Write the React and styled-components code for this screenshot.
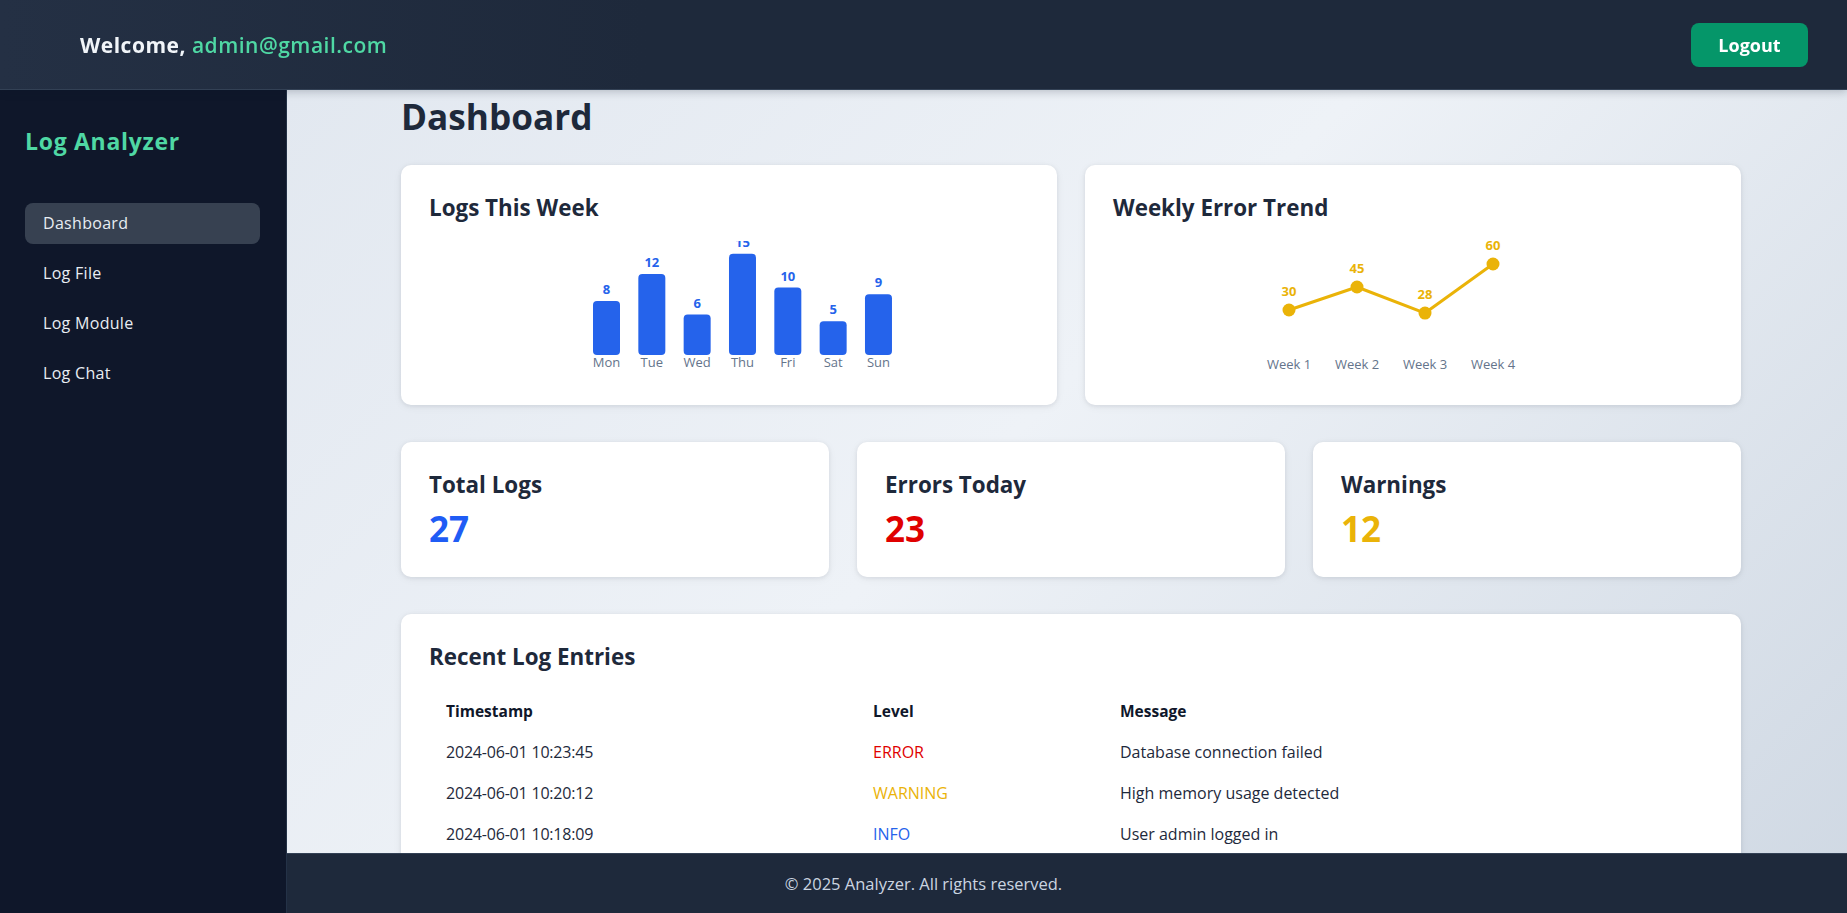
import React from 'react';
import styled, { createGlobalStyle } from 'styled-components';

const GlobalStyle = createGlobalStyle`
  * { box-sizing: border-box; }
  html, body { margin: 0; padding: 0; height: 100%; overflow: hidden; }
  body {
    font-family: "Open Sans", "Liberation Sans", sans-serif;
    background: #0f172a;
  }
`;

const Shell = styled.div`
  height: 100vh;
  display: flex;
  flex-direction: column;
  overflow: hidden;
`;

const Header = styled.header`
  height: 90px;
  flex: none;
  display: flex;
  align-items: center;
  justify-content: space-between;
  padding: 0 39px 0 80px;
  background: linear-gradient(90deg, #243044 0%, #1e293b 35%);
  border-bottom: 1px solid #334155;
  box-shadow: 0 2px 8px rgba(15, 23, 42, 0.22);
  position: relative;
  z-index: 3;
`;

const Welcome = styled.div`
  font-size: 21px;
  font-weight: 700;
  letter-spacing: 0.5px;
  color: #f1f5f9;
`;

const Email = styled.span`
  color: #4fd8a4;
  font-weight: 600;
`;

const LogoutButton = styled.button`
  width: 117px;
  height: 44px;
  border: none;
  border-radius: 8px;
  background: #059669;
  color: #ffffff;
  font-family: inherit;
  font-size: 18px;
  font-weight: 700;
  cursor: pointer;
`;

const Body = styled.div`
  flex: 1;
  min-height: 0;
  display: flex;
`;

const Sidebar = styled.aside`
  width: 287px;
  flex: none;
  background: #0f172a;
  border-right: 1px solid #243247;
  padding: 38px 26px 0 25px;
  position: relative;
  z-index: 2;
`;

const Brand = styled.div`
  font-size: 23px;
  font-weight: 700;
  line-height: 1.2;
  letter-spacing: 0.7px;
  color: #4fd8a4;
  margin-bottom: 47px;
`;

const Nav = styled.nav`
  display: flex;
  flex-direction: column;
  gap: 9px;
`;

const NavItem = styled.div`
  padding: 11px 18px;
  line-height: 19px;
  font-size: 16px;
  letter-spacing: 0.3px;
  color: #e8edf3;
  border-radius: 8px;
  background: ${(p) => (p.$active ? '#374151' : 'transparent')};
`;

const Main = styled.main`
  flex: 1;
  min-width: 0;
  overflow: hidden;
  background: linear-gradient(135deg, #e2e8f0 0%, #eef2f7 45%, #cfd8e3 100%);
  padding: 5px 106px 0 114px;
`;

const Content = styled.div`
  width: 1340px;
  display: flex;
  flex-direction: column;
`;

const PageTitle = styled.h1`
  margin: 0 0 28px;
  font-size: 35.2px;
  font-weight: 700;
  line-height: 1.2;
  color: #1e293b;
`;

const Grid = styled.div`
  display: grid;
  grid-template-columns: repeat(${(p) => p.$cols}, 1fr);
  gap: 28px;
  margin-bottom: 37px;
`;

const Card = styled.section`
  background: #ffffff;
  border-radius: 10px;
  box-shadow: 0 1px 4px rgba(15, 23, 42, 0.08), 0 2px 10px rgba(15, 23, 42, 0.05);
  padding: 30px 28px 27px;
`;

const CardTitle = styled.h2`
  margin: 0;
  font-size: 22.4px;
  font-weight: 700;
  line-height: 1.2;
  color: #1e293b;
`;

const TableTitle = styled(CardTitle)`
  margin-bottom: 20px;
`;

const ChartWrap = styled.div`
  margin-top: ${(p) => p.$top}px;
  margin-bottom: 1px;
  display: flex;
  justify-content: center;
  svg { display: block; overflow: hidden; }
`;

const StatValue = styled.div`
  margin-top: 9px;
  font-size: 35px;
  font-weight: 700;
  line-height: 1.2;
  color: ${(p) => p.$color};
`;

const Table = styled.table`
  width: 100%;
  border-collapse: collapse;
`;

const Th = styled.th`
  width: ${(p) => p.$w || 'auto'};
  text-align: left;
  padding: 10px 17px;
  font-size: 15.5px;
  font-weight: 700;
  line-height: 21px;
  color: #0f172a;
`;

const Td = styled.td`
  padding: 10px 17px;
  font-size: 16px;
  line-height: 21px;
  letter-spacing: ${(p) => (p.$tight ? '-0.2px' : 'normal')};
  color: ${(p) => p.$color || '#1e293b'};
`;

const Footer = styled.footer`
  position: fixed;
  left: 0;
  right: 0;
  bottom: 0;
  height: 60px;
  background: #1e293b;
  border-top: 1px solid #334155;
  display: flex;
  align-items: center;
  justify-content: center;
  color: #cbd5e1;
  font-size: 16.5px;
  z-index: 1;
`;

const weekly = [
  ['Mon', 8],
  ['Tue', 12],
  ['Wed', 6],
  ['Thu', 15],
  ['Fri', 10],
  ['Sat', 5],
  ['Sun', 9],
];

const trend = [
  ['Week 1', 30],
  ['Week 2', 45],
  ['Week 3', 28],
  ['Week 4', 60],
];

const levelColors = { ERROR: '#e00000', WARNING: '#eab308', INFO: '#2563eb' };

const logs = [
  ['2024-06-01 10:23:45', 'ERROR', 'Database connection failed'],
  ['2024-06-01 10:20:12', 'WARNING', 'High memory usage detected'],
  ['2024-06-01 10:18:09', 'INFO', 'User admin logged in'],
];

function BarChart() {
  return (
    <svg width="340" height="136" viewBox="0 0 340 136">
      {weekly.map(([d, v], i) => {
        const x = 34 + i * 45.33;
        const h = v * 6.75;
        const y = 114 - h;
        return (
          <g key={d}>
            <rect x={x} y={y} width="27" height={h} rx="4" fill="#2563eb" />
            <text x={x + 13.5} y={y - 7} textAnchor="middle" fontSize="13" fontWeight="700" fill="#2563eb">
              {v}
            </text>
            <text x={x + 13.5} y={126} textAnchor="middle" fontSize="13" fill="#64748b">
              {d}
            </text>
          </g>
        );
      })}
    </svg>
  );
}

function LineChart() {
  const pts = trend.map(([w, v], i) => ({ w, v, x: 46 + i * 68, y: 115 - v * 1.533 }));
  return (
    <svg width="340" height="142" viewBox="0 -6 340 142">
      <polyline
        points={pts.map((p) => `${p.x},${p.y}`).join(' ')}
        fill="none"
        stroke="#eab308"
        strokeWidth="3"
        strokeLinejoin="round"
      />
      {pts.map((p) => (
        <g key={p.w}>
          <circle cx={p.x} cy={p.y} r="6.5" fill="#eab308" />
          <text x={p.x} y={p.y - 14} textAnchor="middle" fontSize="13" fontWeight="700" fill="#eab308">
            {p.v}
          </text>
          <text x={p.x} y={128} textAnchor="middle" fontSize="13" fill="#64748b">
            {p.w}
          </text>
        </g>
      ))}
    </svg>
  );
}

export default function App() {
  return (
    <>
      <GlobalStyle />
      <Shell>
        <Header>
          <Welcome>
            Welcome, <Email>admin@gmail.com</Email>
          </Welcome>
          <LogoutButton>Logout</LogoutButton>
        </Header>
        <Body>
          <Sidebar>
            <Brand>Log Analyzer</Brand>
            <Nav>
              <NavItem $active>Dashboard</NavItem>
              <NavItem>Log File</NavItem>
              <NavItem>Log Module</NavItem>
              <NavItem>Log Chat</NavItem>
            </Nav>
          </Sidebar>
          <Main>
            <Content>
              <PageTitle>Dashboard</PageTitle>
              <Grid $cols={2}>
                <Card>
                  <CardTitle>Logs This Week</CardTitle>
                  <ChartWrap $top={19}>
                    <BarChart />
                  </ChartWrap>
                </Card>
                <Card>
                  <CardTitle>Weekly Error Trend</CardTitle>
                  <ChartWrap $top={13}>
                    <LineChart />
                  </ChartWrap>
                </Card>
              </Grid>
              <Grid $cols={3}>
                <Card>
                  <CardTitle>Total Logs</CardTitle>
                  <StatValue $color="#1f5cf5">27</StatValue>
                </Card>
                <Card>
                  <CardTitle>Errors Today</CardTitle>
                  <StatValue $color="#e00000">23</StatValue>
                </Card>
                <Card>
                  <CardTitle>Warnings</CardTitle>
                  <StatValue $color="#eab308">12</StatValue>
                </Card>
              </Grid>
              <Card>
                <TableTitle>Recent Log Entries</TableTitle>
                <Table>
                  <thead>
                    <tr>
                      <Th $w="427px">Timestamp</Th>
                      <Th $w="247px">Level</Th>
                      <Th>Message</Th>
                    </tr>
                  </thead>
                  <tbody>
                    {logs.map(([t, l, m]) => (
                      <tr key={t}>
                        <Td $tight>{t}</Td>
                        <Td $color={levelColors[l]}>{l}</Td>
                        <Td>{m}</Td>
                      </tr>
                    ))}
                  </tbody>
                </Table>
              </Card>
            </Content>
          </Main>
        </Body>
        <Footer>© 2025 Analyzer. All rights reserved.</Footer>
      </Shell>
    </>
  );
}
